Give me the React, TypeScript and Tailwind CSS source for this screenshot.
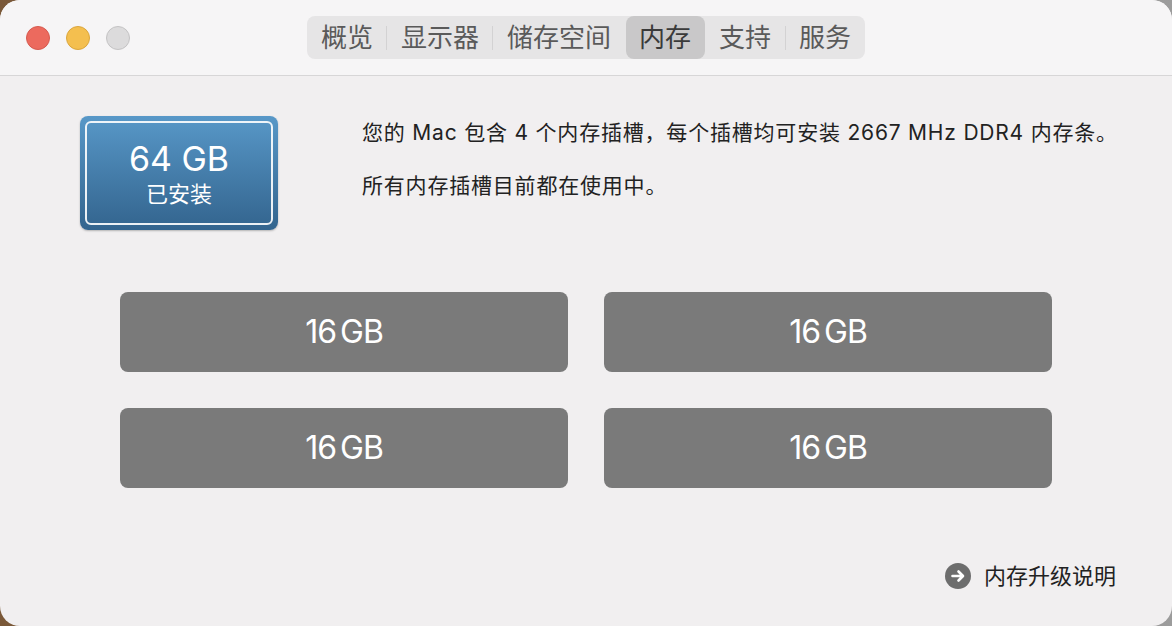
const TABS = ["概览", "显示器", "储存空间", "内存", "支持", "服务"];
const ACTIVE = "内存";

const SLOTS = ["16 GB", "16 GB", "16 GB", "16 GB"];

const FONT = "font-['Inter','Noto_Sans_CJK_SC',sans-serif]";

function TrafficLights() {
  return (
    <div className="flex items-center gap-4 pl-[26px]">
      <span className="h-6 w-6 rounded-full border border-[#d65a4f] bg-[#ec6a5e]" />
      <span className="h-6 w-6 rounded-full border border-[#dba63d] bg-[#f4bf4f]" />
      <span className="h-6 w-6 rounded-full border border-[#c4c3c4] bg-[#dcdbdc]" />
    </div>
  );
}

function Tabs() {
  return (
    <div className="flex h-[43px] items-stretch rounded-lg bg-[#e6e5e6]">
      {TABS.map((tab, i) => {
        const active = tab === ACTIVE;
        const next = TABS[i + 1];
        // separators are hidden next to the selected tab
        const showSep = next && !active && next !== ACTIVE;
        return (
          <div key={tab} className="flex items-center">
            <div
              className={`flex h-full items-center rounded-lg px-[13.5px] text-[26px] leading-none ${
                active ? "bg-[#c9c8c9] text-[#3a3a3a]" : "text-[#5a5a5a]"
              }`}
            >
              {tab}
            </div>
            {next && (
              <span className={`h-6 w-px ${showSep ? "bg-[#d3d2d3]" : "bg-transparent"}`} />
            )}
          </div>
        );
      })}
    </div>
  );
}

function InstalledBadge() {
  return (
    <div className="h-[114px] w-[198px] shrink-0 rounded-[8px] bg-gradient-to-b from-[#5898c8] to-[#33648e] p-[5px] shadow-[0_1px_2px_rgba(0,0,0,0.25)]">
      <div className="flex h-full flex-col items-center justify-center rounded-[6px] border-2 border-white/90 text-white">
        <span className="text-[34px] leading-[40px]">64 GB</span>
        <span className="mt-[1px] text-[22px] leading-[28px]">已安装</span>
      </div>
    </div>
  );
}

function UpgradeLink() {
  return (
    <div className="flex items-center gap-[13px]">
      <svg width="26" height="26" viewBox="0 0 26 26" aria-hidden="true">
        <circle cx="13" cy="13" r="13" fill="#6d6d6d" />
        <path
          d="M7.5 13h10M13.5 8.5 18 13l-4.5 4.5"
          fill="none"
          stroke="#fff"
          strokeWidth="2.6"
          strokeLinecap="round"
          strokeLinejoin="round"
        />
      </svg>
      <span className="text-[22px] leading-7 text-[#222]">内存升级说明</span>
    </div>
  );
}

export default function App() {
  return (
    <div className={`h-[626px] w-[1172px] bg-gradient-to-r from-[#7a5838] via-[#8a7a6a] to-[#9c9c9c] ${FONT}`}>
      <div className="flex h-full flex-col overflow-hidden rounded-[20px] bg-[#f1eff0]">
        {/* title bar */}
        <header className="grid h-[76px] shrink-0 grid-cols-[1fr_auto_1fr] items-center border-b border-[#d7d6d7] bg-[#f6f5f6]">
          <TrafficLights />
          <Tabs />
          <div />
        </header>

        <main className="flex flex-1 flex-col">
          <div className="flex pl-20 pt-10">
            <InstalledBadge />
            <div className="ml-[84px] pt-[3px] text-[21px] leading-7 tracking-[0.8px] text-[#222]">
              <p>您的 Mac 包含 4 个内存插槽，每个插槽均可安装 2667 MHz DDR4 内存条。</p>
              <p className="mt-[25px]">所有内存插槽目前都在使用中。</p>
            </div>
          </div>

          <div className="ml-[120px] mt-[62px] grid w-[932px] grid-cols-2 gap-9 self-start">
            {SLOTS.map((s, i) => (
              <div
                key={i}
                className="flex h-20 items-center justify-center rounded-[8px] bg-[#7a7a7a] text-[32px] tracking-[-1px] text-white [word-spacing:-4px]"
              >
                {s}
              </div>
            ))}
          </div>

          <div className="mt-auto flex justify-end pb-9 pr-14">
            <UpgradeLink />
          </div>
        </main>
      </div>
    </div>
  );
}
